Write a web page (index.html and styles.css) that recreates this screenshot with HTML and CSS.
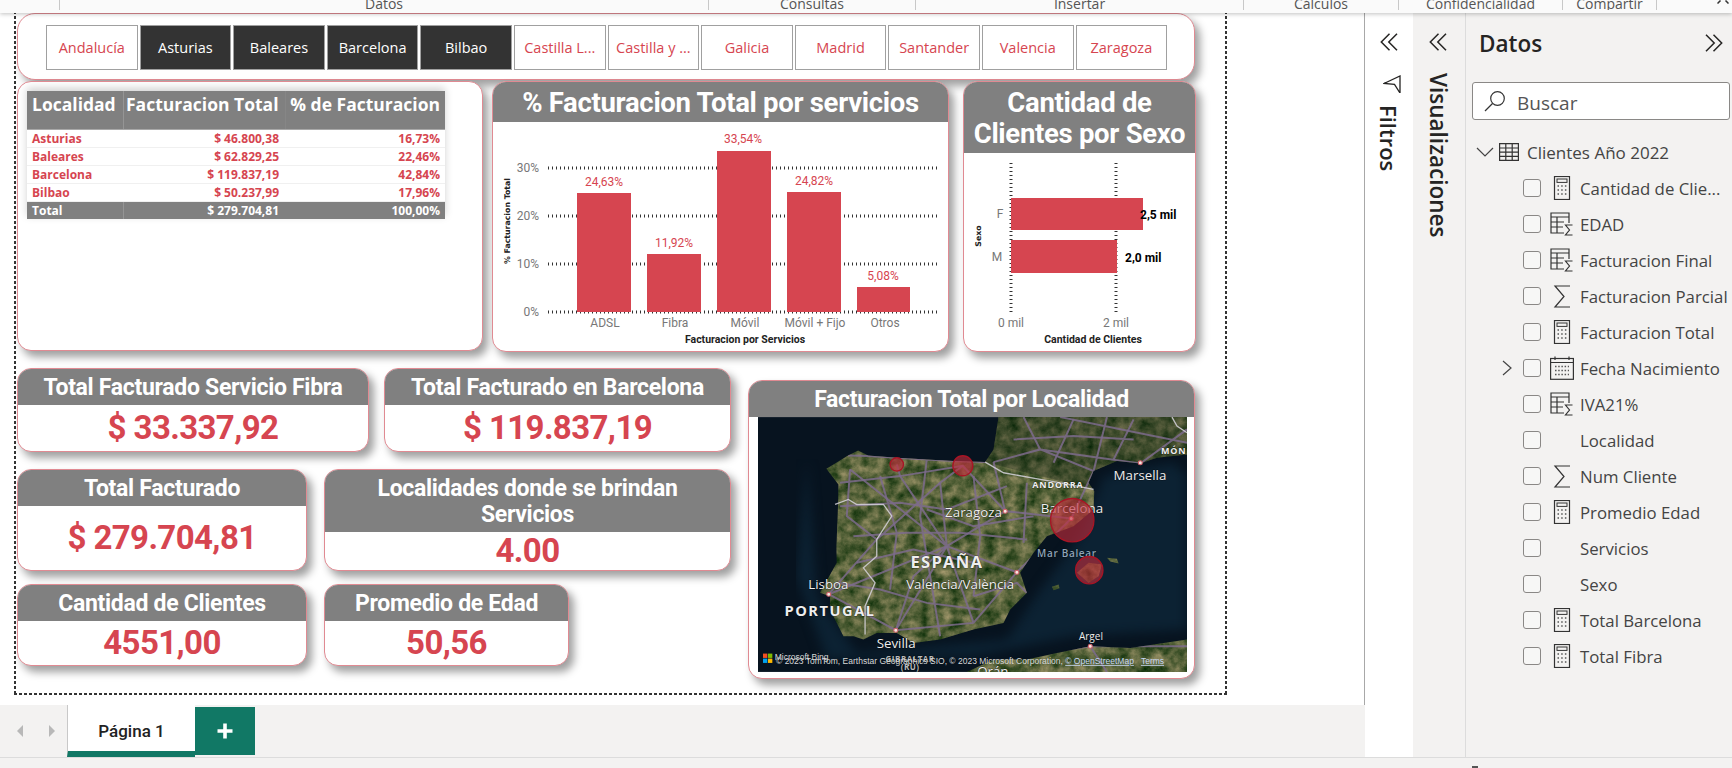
FILE: index.html
```html
<!DOCTYPE html>
<html lang="es">
<head>
<meta charset="utf-8">
<title>Power BI - Clientes</title>
<link rel="stylesheet" href="styles.css">
</head>
<body>
<svg class="defs" width="0" height="0" aria-hidden="true">
  <symbol id="i-calc" viewBox="0 0 24 24">
    <rect x="4.5" y="0.5" width="15" height="23" fill="none" stroke="#333" stroke-width="1.2"/>
    <rect x="7" y="3" width="10" height="3.4" fill="none" stroke="#333"/>
    <path d="M7.5 10h9M7.5 14h9M7.5 18h9" stroke="#555" stroke-width="1.4" stroke-dasharray="1.5 2.2" fill="none"/>
  </symbol>
  <symbol id="i-tsum" viewBox="0 0 24 24">
    <path d="M1 4V21H14M1 4V1H19V11M1 5H19M7 5V21M1 10H14M1 15H13" fill="none" stroke="#333" stroke-width="1.2"/>
    <path d="M22.500 13H15.500L19.500 18L15.500 23H22.500" fill="none" stroke="#333" stroke-width="1.200"/>
  </symbol>
  <symbol id="i-sum" viewBox="0 0 24 24">
    <path d="M20 2H5L14 12.500L5 23H20" fill="none" stroke="#333" stroke-width="1.200"/>
  </symbol>
  <symbol id="i-cal" viewBox="0 0 24 24">
    <rect x="0.600" y="2.500" width="22.800" height="20.800" fill="none" stroke="#333" stroke-width="1.200"/>
    <path d="M0.600 6.500H23.400M5 0.500V4M19 0.500V4" fill="none" stroke="#333" stroke-width="1.200"/>
    <path d="M5 10.500h14M5 14.500h14M5 18.500h14" stroke="#555" stroke-width="1.500" stroke-dasharray="1.500 1.700" fill="none"/>
  </symbol>
  <symbol id="i-dbl-l" viewBox="0 0 18 18">
    <path d="M9.500 0.800L1.300 9L9.500 17.200M17 0.800L8.800 9L17 17.200" fill="none" stroke="#252423" stroke-width="1.500"/>
  </symbol>
  <symbol id="i-dbl-r" viewBox="0 0 18 18">
    <path d="M1 0.800L9.200 9L1 17.200M8.500 0.800L16.700 9L8.500 17.200" fill="none" stroke="#252423" stroke-width="1.500"/>
  </symbol>
</svg>

<header class="ribbon">
  <div class="rb-edge"></div>
  <div class="rb-seg rb-datos"><span>Datos</span></div>
  <div class="rb-seg rb-consultas"><span>Consultas</span></div>
  <div class="rb-seg rb-insertar"><span>Insertar</span></div>
  <div class="rb-seg rb-calculos"><span>Cálculos</span></div>
  <div class="rb-seg rb-conf"><span>Confidencialidad</span></div>
  <div class="rb-seg rb-compartir"><span>Compartir</span></div>
  <div class="rb-seg rb-end">
    <svg width="12" height="4" viewBox="0 0 12 4"><path d="M0.500 3.500L3.500 0.500M8.500 0.500L11.500 3.500" stroke="#333" stroke-width="1.500" fill="none"/></svg>
  </div>
</header>

<div class="workspace">
  <main class="report">
    <div class="canvas-area">
      <div class="page">

        <section class="card slicer">
          <div class="sl-btn">Andalucía</div>
          <div class="sl-btn on">Asturias</div>
          <div class="sl-btn on">Baleares</div>
          <div class="sl-btn on">Barcelona</div>
          <div class="sl-btn on">Bilbao</div>
          <div class="sl-btn">Castilla L...</div>
          <div class="sl-btn">Castilla y ...</div>
          <div class="sl-btn">Galicia</div>
          <div class="sl-btn">Madrid</div>
          <div class="sl-btn">Santander</div>
          <div class="sl-btn">Valencia</div>
          <div class="sl-btn">Zaragoza</div>
        </section>

        <section class="card v-table">
          <table class="grid">
            <thead>
              <tr><th class="c1">Localidad</th><th class="c2">Facturacion Total</th><th class="c3">% de Facturacion</th></tr>
            </thead>
            <tbody>
              <tr><td class="c1">Asturias</td><td class="c2">$ 46.800,38</td><td class="c3">16,73%</td></tr>
              <tr><td class="c1">Baleares</td><td class="c2">$ 62.829,25</td><td class="c3">22,46%</td></tr>
              <tr><td class="c1">Barcelona</td><td class="c2">$ 119.837,19</td><td class="c3">42,84%</td></tr>
              <tr><td class="c1">Bilbao</td><td class="c2">$ 50.237,99</td><td class="c3">17,96%</td></tr>
            </tbody>
            <tfoot>
              <tr><td class="c1">Total</td><td class="c2">$ 279.704,81</td><td class="c3">100,00%</td></tr>
            </tfoot>
          </table>
        </section>

        <section class="card v-columns">
          <h2 class="head big h-40">% Facturacion Total por servicios</h2>
          <svg class="plot" viewBox="493 122 455 229" width="455" height="229">
            <g class="gridl">
              <path d="M548 168H940M548 216H940M548 264H940M548 312H940"/>
            </g>
            <g class="bars">
              <rect x="577" y="193" width="54" height="119"/>
              <rect x="647" y="254" width="54" height="58"/>
              <rect x="717" y="151" width="54" height="161"/>
              <rect x="787" y="192" width="54" height="120"/>
              <rect x="857" y="287" width="53" height="25"/>
            </g>
            <g class="dl">
              <text x="604" y="186">24,63%</text>
              <text x="674" y="247">11,92%</text>
              <text x="743" y="143">33,54%</text>
              <text x="814" y="185">24,82%</text>
              <text x="883" y="280">5,08%</text>
            </g>
            <g class="ax ax-y">
              <text x="539" y="172">30%</text>
              <text x="539" y="220">20%</text>
              <text x="539" y="268">10%</text>
              <text x="539" y="316">0%</text>
            </g>
            <g class="ax">
              <text x="605" y="327">ADSL</text>
              <text x="675" y="327">Fibra</text>
              <text x="745" y="327">Móvil</text>
              <text x="815" y="327">Móvil + Fijo</text>
              <text x="885" y="327">Otros</text>
            </g>
            <text class="ax-t" x="745" y="343">Facturacion por Servicios</text>
            <text class="ax-ty" transform="translate(510 221) rotate(-90)">% Facturacion Total</text>
          </svg>
        </section>

        <section class="card v-sex">
          <h2 class="head big h-71">Cantidad de<br>Clientes por Sexo</h2>
          <svg class="plot" viewBox="964 153 231 198" width="231" height="198">
            <g class="gridl">
              <path d="M1011 163V313M1116 163V313"/>
            </g>
            <g class="bars">
              <rect x="1011" y="198" width="132" height="32"/>
              <rect x="1011" y="240" width="106" height="33"/>
            </g>
            <g class="dl-k">
              <text x="1140" y="219">2,5 mil</text>
              <text x="1125" y="262">2,0 mil</text>
            </g>
            <g class="ax">
              <text x="1000" y="218">F</text>
              <text x="997" y="261">M</text>
              <text x="1011" y="327">0 mil</text>
              <text x="1116" y="327">2 mil</text>
            </g>
            <text class="ax-t" x="1093" y="343">Cantidad de Clientes</text>
            <text class="ax-ty" transform="translate(981 236) rotate(-90)">Sexo</text>
          </svg>
        </section>

        <section class="card kpi k1">
          <h2 class="head h-36">Total Facturado Servicio Fibra</h2>
          <div class="val">$ 33.337,92</div>
        </section>
        <section class="card kpi k2">
          <h2 class="head h-36">Total Facturado en Barcelona</h2>
          <div class="val">$ 119.837,19</div>
        </section>
        <section class="card kpi k3">
          <h2 class="head h-36">Total Facturado</h2>
          <div class="val">$ 279.704,81</div>
        </section>
        <section class="card kpi k4">
          <h2 class="head h-62">Localidades donde se brindan<br>Servicios</h2>
          <div class="val">4.00</div>
        </section>
        <section class="card kpi k5">
          <h2 class="head h-36">Cantidad de Clientes</h2>
          <div class="val">4551,00</div>
        </section>
        <section class="card kpi k6">
          <h2 class="head h-36">Promedio de Edad</h2>
          <div class="val">50,56</div>
        </section>

        <section class="card v-map">
          <h2 class="head h-36">Facturacion Total por Localidad</h2>
          <div class="map-wrap">
            <svg class="map" viewBox="54 123 1286 764" width="429" height="255">
              <defs>
                <filter id="sat" x="0" y="0" width="100%" height="100%" color-interpolation-filters="sRGB">
                  <feTurbulence type="fractalNoise" baseFrequency=".03" numOctaves="5" seed="11"/>
                  <feColorMatrix type="matrix" values=".72 0 0 0 -.03  .5 0 0 0 .13  .48 0 0 0 -.02  0 0 0 0 1"/>
                </filter>
                <filter id="sea" x="0" y="0" width="100%" height="100%" color-interpolation-filters="sRGB">
                  <feGaussianBlur stdDeviation="16"/>
                </filter>
                <clipPath id="land">
                  <path d="M259 278L280 265L324 238L354 223L384 238L470 245L560 250L640 255L735 258L760 220L775 123H1340V235L1250 245L1200 262L1130 255L1060 285L1045 320L1062 345L1060 400L1000 450L920 480L880 530L840 590L860 650L810 700L790 740L700 760L600 790L520 800L470 770L410 770L370 790L340 780L310 780L270 700L270 660L240 650L290 560L289 513L294 385L295 325Z"/>
                  <path d="M680 887L760 850L860 850L950 830L1050 810L1170 815L1340 790V887Z"/>
                  <path d="M1010 590L1045 560L1085 565L1075 600L1045 620Z"/>
                  <path d="M1100 545L1130 548L1135 562L1110 556Z"/>
                  <path d="M935 632L955 625L958 636L940 642Z"/>
                </clipPath>
              </defs>
              <rect class="m-ocean" x="54" y="123" width="1286" height="764"/>
              <path class="m-shelf" filter="url(#sea)" d="M200 250L230 660L350 830L800 790L900 640L1020 480L1090 300L1300 260L1340 300L1340 760L1000 780L700 840L260 850L170 600Z"/>
              <g clip-path="url(#land)">
                <rect x="54" y="123" width="1286" height="764" filter="url(#sat)"/>
                <path class="m-dark" d="M735 258L775 123H1340V260L1060 340L900 300Z"/>
                <g class="m-roads">
                  <path d="M620 510L330 280M620 510L600 320L668 269M620 510L795 405L993 427M620 510L830 588M620 510L467 762M620 510L266 654M620 510L480 300L470 265"/>
                  <path d="M300 320L480 300L668 269L795 405M330 280L320 420L410 490L266 654M266 654L467 762L700 740L830 588L993 427M795 405L760 258M410 490L600 320M467 762L520 600L620 510M700 740L620 510"/>
                  <path d="M760 258L900 220L1060 285L993 427M900 220L850 123M900 220L1200 262M1060 285L1100 123M1200 262L1340 160M960 123L1340 200"/>
                  <path d="M760 850L1050 810L1340 810M1050 810L1100 887M700 660L830 620L860 650M560 400L700 450L880 420M350 560L520 520L700 560"/>
                  <path d="M324 238L384 240L470 245L560 250L640 255L735 258M300 390L480 380L620 400L800 330M340 480L500 470L660 470L860 490M290 620L420 640L560 680L720 700M420 300L470 470L450 640M560 250L540 420L570 600L600 780M700 300L720 480L700 660M860 320L850 500M1000 130L940 260M1180 130L1120 250M820 190L1000 180L1180 190"/>
                </g>
              </g>
              <g class="m-border">
                <path d="M285 385L325 370L350 385L430 385L455 420L410 490L410 540L370 575L405 620L375 690L375 775"/>
                <path d="M735 258L790 290L900 310L960 320L1060 340"/>
                <path d="M1295 123L1310 150L1340 170"/>
              </g>
              <g class="m-city">
                <circle cx="1200" cy="260" r="6"/><circle cx="795" cy="405" r="6"/><circle cx="993" cy="427" r="6"/>
                <circle cx="830" cy="588" r="6"/><circle cx="266" cy="654" r="6"/><circle cx="467" cy="762" r="6"/><circle cx="1050" cy="810" r="6"/>
              </g>
              <g class="m-lbl">
                <text x="1199" y="311">Marsella</text>
                <text x="995" y="411">Barcelona</text>
                <text x="700" y="424">Zaragoza</text>
                <text x="660" y="637">Valencia/València</text>
                <text x="265" y="637">Lisboa</text>
                <text x="468" y="816">Sevilla</text>
                <text class="sm" x="1052" y="792">Argel</text>
                <text x="758" y="898">Orán</text>
                <text class="caps mid" x="953" y="336">ANDORRA</text>
                <text class="caps mid" x="1300" y="234">MÓN</text>
                <text class="caps big" x="620" y="575">ESPAÑA</text>
                <text class="caps big2" x="270" y="719">PORTUGAL</text>
                <text class="caps tiny" x="510" y="857">GIBRALTAR</text>
                <text class="caps tiny" x="510" y="882">(RU)</text>
                <text class="sea" x="980" y="543">Mar Balear</text>
              </g>
              <g class="m-bub">
                <circle cx="470" cy="265" r="20"/>
                <circle cx="668" cy="269" r="30"/>
                <circle cx="996" cy="432" r="65"/>
                <circle cx="1047" cy="582" r="41"/>
              </g>
              <g>
                <rect class="ms1" x="69" y="832" width="13" height="13"/>
                <rect class="ms2" x="84" y="832" width="13" height="13"/>
                <rect class="ms3" x="69" y="847" width="13" height="13"/>
                <rect class="ms4" x="84" y="847" width="13" height="13"/>
                <text class="attr" x="104" y="852">Microsoft Bing</text>
                <text class="attr" x="108" y="863">© 2023 TomTom, Earthstar Geographics SIO, © 2023 Microsoft Corporation, <tspan class="lnk">© OpenStreetMap</tspan> <tspan class="lnk" dx="14">Terms</tspan></text>
              </g>
            </svg>
          </div>
        </section>
      </div>
    </div>

    <footer class="tabs">
      <div class="tab-nav">
        <svg width="10" height="14" viewBox="0 0 10 14"><path class="tri" d="M8 1V13L2 7Z"/></svg>
        <svg width="10" height="14" viewBox="0 0 10 14"><path class="tri" d="M2 1V13L8 7Z"/></svg>
      </div>
      <div class="tab">Página 1</div>
      <div class="tab-add"><svg width="18" height="18" viewBox="0 0 18 18"><path d="M9 1.500V16.500M1.500 9H16.500" stroke="#fff" stroke-width="3.600" fill="none"/></svg></div>
    </footer>
  </main>

  <aside class="rail rail-filter">
    <svg class="dbl" width="18" height="18"><use href="#i-dbl-l"/></svg>
    <svg class="funnel" width="18" height="18" viewBox="0 0 18 18"><path d="M1 8.500L17 1V18L11.500 9.300L1 8.500Z" fill="none" stroke="#252423" stroke-width="1.300"/></svg>
    <div class="vtext">Filtros</div>
  </aside>
  <aside class="rail rail-viz">
    <svg class="dbl" width="18" height="18"><use href="#i-dbl-l"/></svg>
    <div class="vtext vz">Visualizaciones</div>
  </aside>

  <aside class="data">
    <div class="data-head">
      <h1>Datos</h1>
      <svg width="18" height="18"><use href="#i-dbl-r"/></svg>
    </div>
    <div class="search">
      <svg width="22" height="22" viewBox="0 0 22 22"><circle cx="13.500" cy="8.500" r="6.800" fill="none" stroke="#333" stroke-width="1.200"/><path d="M8.500 13.500L1 21" stroke="#333" stroke-width="1.200"/></svg>
      <span>Buscar</span>
    </div>
    <div class="tree-root">
      <svg width="18" height="10" viewBox="0 0 18 10"><path d="M1 1L9 9L17 1" fill="none" stroke="#444" stroke-width="1.200"/></svg>
      <svg width="20" height="18" viewBox="0 0 20 18"><path d="M0.600 0.600H19.400V17.400H0.600ZM0.600 5H19.400M0.600 9.200H19.400M0.600 13.300H19.400M6.800 0.600V17.400M13.200 0.600V17.400" fill="none" stroke="#333" stroke-width="1.200"/></svg>
      <span>Clientes Año 2022</span>
    </div>
    <ul class="fields">
      <li><i class="exp"></i><b class="chk"></b><svg class="ic"><use href="#i-calc"/></svg><span>Cantidad de Clie...</span></li>
      <li><i class="exp"></i><b class="chk"></b><svg class="ic"><use href="#i-tsum"/></svg><span>EDAD</span></li>
      <li><i class="exp"></i><b class="chk"></b><svg class="ic"><use href="#i-tsum"/></svg><span>Facturacion Final</span></li>
      <li><i class="exp"></i><b class="chk"></b><svg class="ic"><use href="#i-sum"/></svg><span>Facturacion Parcial</span></li>
      <li><i class="exp"></i><b class="chk"></b><svg class="ic"><use href="#i-calc"/></svg><span>Facturacion Total</span></li>
      <li><i class="exp"><svg width="10" height="16" viewBox="0 0 10 16"><path d="M1 1L9 8L1 15" fill="none" stroke="#444" stroke-width="1.200"/></svg></i><b class="chk"></b><svg class="ic"><use href="#i-cal"/></svg><span>Fecha Nacimiento</span></li>
      <li><i class="exp"></i><b class="chk"></b><svg class="ic"><use href="#i-tsum"/></svg><span>IVA21%</span></li>
      <li><i class="exp"></i><b class="chk"></b><svg class="ic"></svg><span>Localidad</span></li>
      <li><i class="exp"></i><b class="chk"></b><svg class="ic"><use href="#i-sum"/></svg><span>Num Cliente</span></li>
      <li><i class="exp"></i><b class="chk"></b><svg class="ic"><use href="#i-calc"/></svg><span>Promedio Edad</span></li>
      <li><i class="exp"></i><b class="chk"></b><svg class="ic"></svg><span>Servicios</span></li>
      <li><i class="exp"></i><b class="chk"></b><svg class="ic"></svg><span>Sexo</span></li>
      <li><i class="exp"></i><b class="chk"></b><svg class="ic"><use href="#i-calc"/></svg><span>Total Barcelona</span></li>
      <li><i class="exp"></i><b class="chk"></b><svg class="ic"><use href="#i-calc"/></svg><span>Total Fibra</span></li>
    </ul>
  </aside>
</div>
<div class="status"><span class="status-mark"></span></div>
</body>
</html>
```
FILE: styles.css
```css
* { box-sizing: border-box; }
html, body { margin: 0; padding: 0; }
body {
  width: 1732px; height: 768px; overflow: hidden;
  display: flex; flex-direction: column;
  background: #fff;
  font-family: "Open Sans", "Liberation Sans", sans-serif;
}
.defs { position: absolute; }

/* Ribbon */
.ribbon {
  height: 13px; flex: none; display: flex;
  background: #fafafa; position: relative; z-index: 5;
  box-shadow: 0 1px 4px rgba(0,0,0,.25);
  color: #555; font-size: 14px;
}
.rb-edge { width: 59px; }
.rb-seg {
  height: 10px; border-left: 1px solid #c8c8c8; overflow: hidden;
  display: flex; justify-content: center; align-items: flex-end; line-height: 14px;
}
.rb-seg span { display: block; margin-bottom: -1px; white-space: nowrap; }
.rb-datos { width: 649px; }
.rb-consultas { width: 207px; }
.rb-insertar { width: 328px; }
.rb-calculos { width: 155px; }
.rb-conf { width: 164px; }
.rb-compartir { width: 94px; }
.rb-end { width: 76px; align-items: flex-start; justify-content: flex-start; padding-left: 60px; }

/* Layout */
.workspace { flex: 1; display: flex; min-height: 0; }
.report { width: 1365px; display: flex; flex-direction: column; }
.canvas-area { flex: 1; min-height: 0; border-right: 1px solid #a8a8a8; overflow: hidden; }
.page {
  position: relative; width: 1213px; height: 684px;
  margin: -2px 0 0 14px; border: 2px solid transparent;
  background-color: #fff;
  background-origin: border-box; background-clip: border-box;
  background-repeat: no-repeat;
  background-image:
    repeating-linear-gradient(90deg, #333 0 3px, transparent 3px 5px),
    repeating-linear-gradient(90deg, #333 0 3px, transparent 3px 5px),
    repeating-linear-gradient(180deg, #333 0 3px, transparent 3px 5px),
    repeating-linear-gradient(180deg, #333 0 3px, transparent 3px 5px);
  background-size: 100% 2px, 100% 2px, 2px 100%, 2px 100%;
  background-position: left top, left bottom, left top, right top;
}

/* Cards */
.card {
  position: absolute; background: #fff; overflow: hidden;
  border: 1px solid #e08a92; border-radius: 14px;
  box-shadow: 5px 6px 9px rgba(0,0,0,.38);
  display: flex; flex-direction: column;
}
.head {
  margin: 0; flex: none; background: #808080; color: #fff;
  font-family: Roboto, "Liberation Sans", sans-serif; font-weight: 700;
  font-size: 23px; letter-spacing: -.3px; line-height: 26px; text-align: center;
  display: flex; align-items: center; justify-content: center;
  padding-top: 2px;
}
.big { font-size: 27.500px; line-height: 31px; letter-spacing: -.3px; padding-top: 0; }
.h-36 { height: 36px; }
.h-40 { height: 40px; }
.h-62 { height: 62px; }
.h-71 { height: 71px; }

/* Slicer */
.slicer {
  left: 1px; top: 0; width: 1178px; height: 67px; border-radius: 18px;
  flex-direction: row; gap: 2px; padding: 11px 0 0 28px; overflow: visible;
}
.sl-btn {
  width: 91.600px; height: 45px; flex: none;
  border: 1px solid #a0a0a0; background: #fff; color: #d64550;
  font-size: 14.500px; display: flex; align-items: center; justify-content: center;
  white-space: nowrap;
}
.sl-btn.on { background: #333; color: #fff; }

/* Table */
.v-table { left: 1px; top: 68px; width: 466px; height: 270px; padding: 9px 0 0 9px; }
.grid {
  border-collapse: collapse; table-layout: fixed; width: 418px;
  font-weight: 700; font-size: 12px; color: #d64550;
  box-shadow: 0 -3px 8px rgba(0,0,0,.18);
}
.grid .c1 { width: 96px; text-align: left; padding-left: 5px; }
.grid .c2 { width: 162px; text-align: right; padding-right: 6px; padding-left: 0; }
.grid .c3 { width: 160px; text-align: right; padding-right: 5px; padding-left: 0; }
.grid th {
  height: 38px; background: #808080; color: #fff; font-size: 17.500px;
  vertical-align: top; padding-top: 1px; line-height: 24px; white-space: nowrap;
  border-bottom: 1px solid #a8a8a8; border-left: 1px solid #959595;
}
.grid th.c1 { border-left: 0; }
.grid th.c3 { border-left-color: #868686; }
.grid td { height: 18px; padding-top: 0; padding-bottom: 0; line-height: 17px; border-bottom: 1px solid #f0f0f0; }
.grid tfoot td { background: #808080; color: #fff; border-top: 1px solid #a8a8a8; border-bottom: 0; }
.grid tfoot td.c2 { border-left: 1px solid #959595; }

/* Charts */
.v-columns { left: 476px; top: 68px; width: 457px; height: 271px; }
.v-sex { left: 947px; top: 68px; width: 233px; height: 271px; }
.plot { display: block; flex: none; }
.plot text { font-family: Roboto, "Liberation Sans", sans-serif; }
.gridl path { stroke: #333; stroke-width: 3; stroke-dasharray: 1 3; fill: none; }
.bars rect { fill: #d64550; }
.dl text { font-size: 12px; fill: #d64550; text-anchor: middle; }
.dl-k text { font-size: 12px; font-weight: 700; fill: #000; }
.ax text { font-size: 12px; fill: #777; text-anchor: middle; }
.ax-y text { text-anchor: end; }
.plot .ax-t { font-size: 10.500px; font-weight: 700; fill: #222; text-anchor: middle; }
.plot .ax-ty { font-family: "DejaVu Sans", sans-serif; font-size: 7.800px; font-weight: 700; fill: #222; text-anchor: middle; }

/* KPI */
.val {
  flex: 1; display: flex; align-items: center; justify-content: center;
  font-family: Roboto, "Liberation Sans", sans-serif; font-weight: 700;
  font-size: 33px; letter-spacing: -.6px; color: #d64550; line-height: 1;
  padding-bottom: 1px;
}
.k1 { left: 1px; top: 355px; width: 352px; height: 84px; }
.k2 { left: 368px; top: 355px; width: 347px; height: 84px; }
.k3 { left: 1px; top: 456px; width: 290px; height: 102px; }
.k4 { left: 308px; top: 456px; width: 407px; height: 102px; }
.k5 { left: 1px; top: 571px; width: 290px; height: 82px; }
.k6 { left: 308px; top: 571px; width: 245px; height: 82px; }

/* Map */
.v-map { left: 732px; top: 367px; width: 447px; height: 299px; }
.map-wrap { padding: 0 0 0 9px; }
.map { display: block; }
.m-ocean { fill: #07131f; }
.m-shelf { fill: #0c2233; }
.m-dark { fill: #0c1a10; opacity: .3; }
.m-roads path { fill: none; stroke: #7d6b8c; stroke-width: 6; opacity: .85; }
.m-border path { fill: none; stroke: #d6d2dc; stroke-width: 4; opacity: .85; }
.m-city circle { fill: #f4e6e0; stroke: #d0606a; stroke-width: 3; }
.m-lbl text {
  font-family: "Open Sans", sans-serif; font-size: 40px; fill: #eee; text-anchor: middle;
  paint-order: stroke; stroke: rgba(0,0,0,.45); stroke-width: 3px;
}
.m-lbl .sm { font-size: 30px; }
.m-lbl .caps { font-weight: 700; }
.m-lbl .mid { font-size: 27px; letter-spacing: 2.500px; }
.m-lbl .big { font-size: 50px; letter-spacing: 3.500px; }
.m-lbl .big2 { font-size: 44px; letter-spacing: 4.500px; }
.m-lbl .tiny { font-size: 24px; letter-spacing: 1.500px; fill: #bbb; }
.m-lbl .sea { font-size: 30px; fill: #8fa4b8; letter-spacing: 2px; font-weight: 600; }
.m-bub circle { fill: rgba(196,44,60,.62); stroke: #a81525; stroke-width: 4; }
.ms1 { fill: #f25022; } .ms2 { fill: #7fba00; } .ms3 { fill: #00a4ef; } .ms4 { fill: #ffb900; }
.attr { font-family: "Liberation Sans", sans-serif; font-size: 25.500px; fill: #d8d8d8; }
.lnk { fill: #c8d8f4; text-decoration: underline; }

/* Tabs */
.tabs { height: 52px; flex: none; background: #f3f2f1; display: flex; align-items: flex-start; }
.tab-nav { width: 67px; height: 52px; display: flex; align-items: center; gap: 22px; padding-left: 15px; }
.tri { fill: #b8b8b8; }
.tab {
  width: 128px; height: 52px; background: #fff; padding-top: 5px;
  border-left: 1px solid #c8c8c8; border-bottom: 6px solid #117865;
  font-family: Roboto, sans-serif; font-size: 17px; font-weight: 500; color: #222;
  display: flex; align-items: center; justify-content: center;
}
.tab-add {
  width: 60px; height: 48px; margin-top: 2px; background: #117865;
  display: flex; align-items: center; justify-content: center;
}

/* Rails */
.rail { flex: none; display: flex; flex-direction: column; align-items: center; }
.rail-filter { width: 48px; background: #fff; }
.rail-filter .dbl { margin: 20px 0 0 -1px; }
.funnel { margin: 24px 0 0 5px; }
.rail-viz { width: 53px; background: #f3f2f1; border-right: 1px solid #dcdcdc; }
.rail-viz .dbl { margin: 20px 0 0 -2px; }
.vtext {
  writing-mode: vertical-rl; font-weight: 600; font-size: 22px; color: #252423;
  line-height: 24px; margin-top: 12px; margin-left: -1px;
}
.vz { margin-top: 22px; margin-left: -3px; font-size: 22.500px; }

/* Data pane */
.data { flex: 1; background: #f3f2f1; padding-left: 6px; }
.data-head { height: 69px; display: flex; align-items: center; justify-content: space-between; padding: 0 9px 9px 7px; }
.data-head h1 { margin: 0; font-size: 22.500px; font-weight: 600; color: #252423; }
.search {
  width: 258px; height: 38px; background: #fff; border: 1px solid #8a8886; border-radius: 3px;
  display: flex; align-items: center; gap: 11px; padding-left: 11px;
  font-size: 19px; color: #555;
}
.search span { margin-top: 3px; }
.tree-root { height: 37px; margin-top: 13px; display: flex; align-items: center; padding-left: 4px; color: #444; font-size: 17px; }
.tree-root svg:nth-child(2) { margin: 0 8px 0 5px; }
.tree-root span { margin-top: 1px; }
.fields { list-style: none; margin: 0; padding: 0; }
.fields li { height: 36px; display: flex; align-items: center; color: #444; font-size: 16.800px; white-space: nowrap; }
.exp { width: 51px; padding-left: 30px; display: flex; font-style: normal; }
.chk { width: 18px; height: 18px; flex: none; border: 1px solid #8a8886; border-radius: 3px; background: #f7f7f6; }
.ic { width: 24px; height: 24px; flex: none; margin: 0 6px 0 9px; }

.status { height: 11px; flex: none; background: #f3f2f1; border-top: 1px solid #dcdcdc; padding: 8px 0 0 1472px; }
.status-mark { display: block; width: 6px; height: 2px; background: #555; }
```
